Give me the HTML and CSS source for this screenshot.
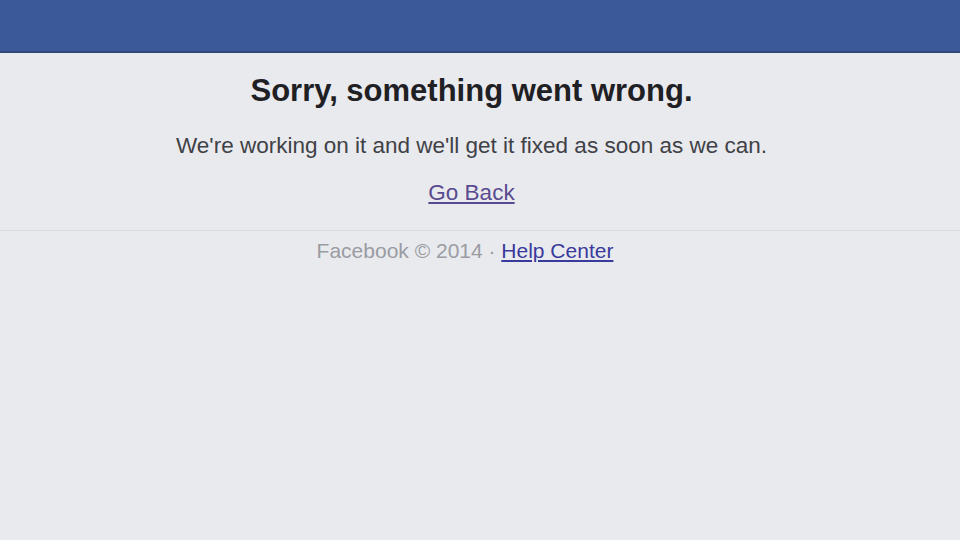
FILE: index.html
```html
<!DOCTYPE html>
<html lang="en">
<head>
    <meta charset="UTF-8">
    <title>Error</title>
    <link rel="stylesheet" href="styles.css">
</head>
<body>

<header class="topbar"></header>

<main class="error-box">
    <h1>Sorry, something went wrong.</h1>
    <p class="message">We're working on it and we'll get it fixed as soon as we can.</p>
    <p class="back"><a href="#">Go Back</a></p>
</main>

<footer class="footer">
    Facebook &copy; 2014 &middot; <a href="#">Help Center</a>
</footer>

</body>
</html>
```

FILE: styles.css
```css
body {
    margin: 0;
    background-color: #e9eaee;
    font-family: "Liberation Sans", Arial, sans-serif;
    color: #333;
}
.topbar {
    height: 51px;
    background-color: #3b5998;
    border-bottom: 2px solid #2f477a;
}
.error-box {
    text-align: center;
    padding: 20px 17px 23px 0;
    border-bottom: 1px solid #dcdde1;
}
.error-box h1 {
    margin: 0;
    font-size: 31px;
    line-height: 36px;
    color: #1f2024;
}
.message {
    margin: 23px 0 0;
    font-size: 22.5px;
    line-height: 28px;
    color: #404146;
}
.back {
    margin: 19px 0 0;
    font-size: 22.5px;
    line-height: 28px;
}
.back a {
    color: #5a4a8f;
}
.footer {
    text-align: center;
    padding: 7px 30px 0 0;
    font-size: 21px;
    line-height: 26px;
    color: #9a9ca2;
}
.footer a {
    color: #3a3a9c;
}
```
